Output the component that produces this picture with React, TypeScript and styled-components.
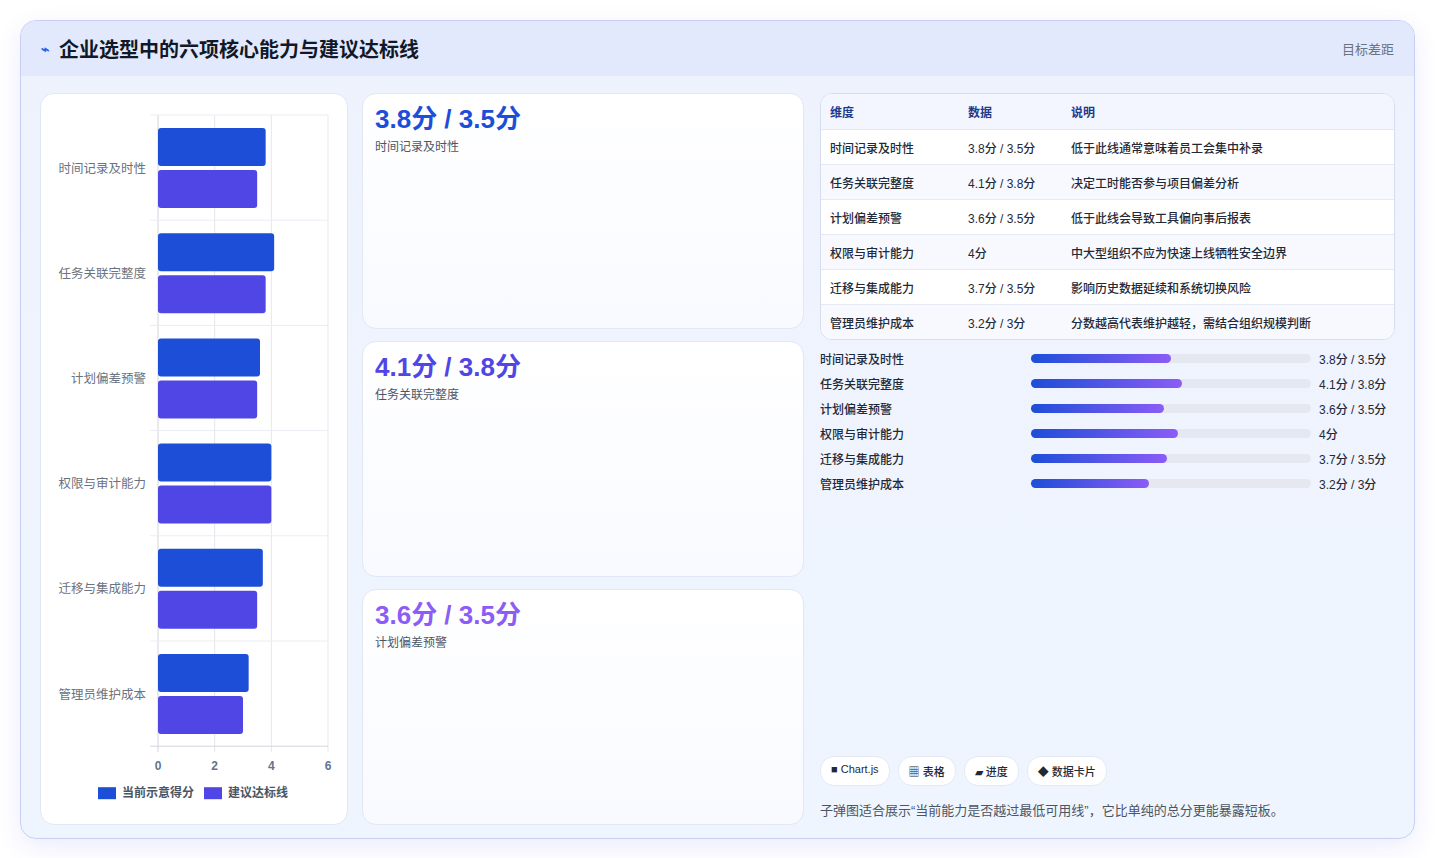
import React from "react";
import styled, { createGlobalStyle } from "styled-components";

const G = createGlobalStyle`
  *{box-sizing:border-box;}
  body{margin:0;background:#fff;font-family:"Liberation Sans","Noto Sans CJK SC",sans-serif;}
`;
const Page = styled.div`padding:20px 20px 19px 20px;width:1435px;height:858px;`;
const Frame = styled.div`height:100%;border:1px solid #c7cff5;border-radius:16px;overflow:hidden;display:flex;flex-direction:column;
  background:linear-gradient(180deg,#eef2fd,#eff5fe);box-shadow:0 8px 24px rgba(99,102,241,0.12);`;
const Header = styled.div`height:55px;flex:none;background:#e2e9fd;display:flex;align-items:center;padding:0 20px;gap:10px;`;
const Title = styled.h1`margin:0;font-size:20px;font-weight:700;color:#111827;flex:1;`;
const Bolt = styled.span`color:#2563eb;font-size:14px;font-weight:700;`;
const Sub = styled.span`font-size:13px;color:#6b7280;`;
const Body = styled.div`flex:1;display:grid;grid-template-columns:308px 442px 577px;gap:12px;column-gap:14px;padding:17px 19px 18px 19px;`;
const Card = styled.div`background:#fff;border:1px solid #e1e7f5;border-radius:14px;`;
const ChartCard = styled(Card)`padding:10px;display:flex;flex-direction:column;`;
const Mid = styled.div`display:grid;grid-template-rows:repeat(3,1fr);gap:12px;`;
const KCard = styled(Card)`padding:9px 12px;background:linear-gradient(180deg,#fff,#f8faff);`;
const Big = styled.div<{c:string}>`font-size:26px;font-weight:700;color:${p=>p.c};line-height:32px;`;
const KLabel = styled.div`font-size:12px;color:#4b5563;margin-top:2px;`;
const Right = styled.div`display:flex;flex-direction:column;margin-left:2px;`;
const Table = styled.div`border:1px solid #d6ddf0;border-radius:12px;overflow:hidden;background:#fff;`;
const Row = styled.div<{h?:boolean;alt?:boolean}>`display:grid;grid-template-columns:138px 103px 1fr;height:35px;align-items:center;padding:0 9px;font-size:12px;
  color:${p=>p.h?"#1e3a8a":"#1f2937"};font-weight:${p=>p.h?700:500};background:${p=>p.h?"#f3f6fe":p.alt?"#f7f9ff":"#fff"};border-top:${p=>p.h?"none":"1px solid #e5e9f4"};`;
const Bars = styled.div`display:flex;flex-direction:column;gap:7px;margin-top:9px;`;
const BRow = styled.div`display:grid;grid-template-columns:211px 1fr 76px;align-items:center;font-size:12px;font-weight:500;color:#1f2937;height:18px;`;
const Track = styled.div`height:9px;border-radius:5px;background:#e5e8f0;margin-right:8px;`;
const Fill = styled.div`height:100%;border-radius:5px;background:linear-gradient(90deg,#1d4ed8,#8b5cf6);`;
const Spacer = styled.div`flex:1;`;
const Chips = styled.div`display:flex;gap:8px;`;
const Chip = styled.span`font-size:11px;color:#1f2937;font-weight:500;background:#fff;border:1px solid #e5e9f4;border-radius:14px;padding:6px 10px;`;
const Note = styled.p`margin:14px 0 6px;font-size:13px;color:#4b5563;`;

const cats=["时间记录及时性","任务关联完整度","计划偏差预警","权限与审计能力","迁移与集成能力","管理员维护成本"];
const cur=[3.8,4.1,3.6,4,3.7,3.2];
const tgt=[3.5,3.8,3.5,4,3.5,3];
const vals=["3.8分 / 3.5分","4.1分 / 3.8分","3.6分 / 3.5分","4分","3.7分 / 3.5分","3.2分 / 3分"];
const notes=["低于此线通常意味着员工会集中补录","决定工时能否参与项目偏差分析","低于此线会导致工具偏向事后报表","中大型组织不应为快速上线牺牲安全边界","影响历史数据延续和系统切换风险","分数越高代表维护越轻，需结合组织规模判断"];

function Chart(){
  const x0=107,w=170,y0=11,rh=105.2,u=w/6;
  return <svg width="288" height="710" style={{fontFamily:"'Liberation Sans','Noto Sans CJK SC',sans-serif"}}>
    {[1,2,3].map(i=><line key={i} x1={x0+i*w/3} x2={x0+i*w/3} y1={y0} y2={y0+rh*6+6} stroke="#e5e7eb"/>)}
    <line x1={x0} x2={x0} y1={y0} y2={y0+rh*6+6} stroke="#d1d5db"/>
    {[0,1,2,3,4,5,6].map(i=><line key={i} x1={x0-8} x2={x0+w} y1={y0+i*rh} y2={y0+i*rh} stroke={i==6?"#d1d5db":"#e9edf3"}/>)}
    {cats.map((c,i)=>{const y=y0+i*rh;return <g key={c}>
      <text x={x0-12} y={y+rh/2+5} textAnchor="end" fontSize="12.5" fill="#6b7280">{c}</text>
      <rect x={x0} y={y+13} width={cur[i]*u} height={38} rx="3" fill="#1d4ed8"/>
      <rect x={x0} y={y+55} width={tgt[i]*u} height={38} rx="3" fill="#4f46e5"/>
    </g>})}
    {[0,2,4,6].map((v,i)=><text key={v} x={x0+i*w/3} y={y0+rh*6+24} textAnchor="middle" fontSize="12" fontWeight="700" fill="#64748b">{v}</text>)}
    <rect x="47" y={y0+rh*6+41} width="18" height="12" fill="#1d4ed8"/>
    <text x="71" y={y0+rh*6+51} fontSize="12" fontWeight="700" fill="#4b5563">当前示意得分</text>
    <rect x="153" y={y0+rh*6+41} width="18" height="12" fill="#4f46e5"/>
    <text x="177" y={y0+rh*6+51} fontSize="12" fontWeight="700" fill="#4b5563">建议达标线</text>
  </svg>;
}

export default function App(){
  return <><G/><Page><Frame>
    <Header><Bolt>⌁</Bolt><Title>企业选型中的六项核心能力与建议达标线</Title><Sub>目标差距</Sub></Header>
    <Body>
      <ChartCard><Chart/></ChartCard>
      <Mid>
        <KCard><Big c="#1d4ed8">3.8分 / 3.5分</Big><KLabel>时间记录及时性</KLabel></KCard>
        <KCard><Big c="#4f46e5">4.1分 / 3.8分</Big><KLabel>任务关联完整度</KLabel></KCard>
        <KCard><Big c="#8b5cf6">3.6分 / 3.5分</Big><KLabel>计划偏差预警</KLabel></KCard>
      </Mid>
      <Right>
        <Table>
          <Row h><span>维度</span><span>数据</span><span>说明</span></Row>
          {cats.map((c,i)=><Row key={c} alt={i%2==1}><span>{c}</span><span>{vals[i]}</span><span>{notes[i]}</span></Row>)}
        </Table>
        <Bars>
          {cats.map((c,i)=><BRow key={c}><span>{c}</span><Track><Fill style={{width:`${cur[i]/7.6*100}%`}}/></Track><span>{vals[i]}</span></BRow>)}
        </Bars>
        <Spacer/>
        <Chips><Chip>■ Chart.js</Chip><Chip>▦ 表格</Chip><Chip>▰ 进度</Chip><Chip>◆ 数据卡片</Chip></Chips>
        <Note>子弹图适合展示“当前能力是否越过最低可用线”，它比单纯的总分更能暴露短板。</Note>
      </Right>
    </Body>
  </Frame></Page></>;
}
